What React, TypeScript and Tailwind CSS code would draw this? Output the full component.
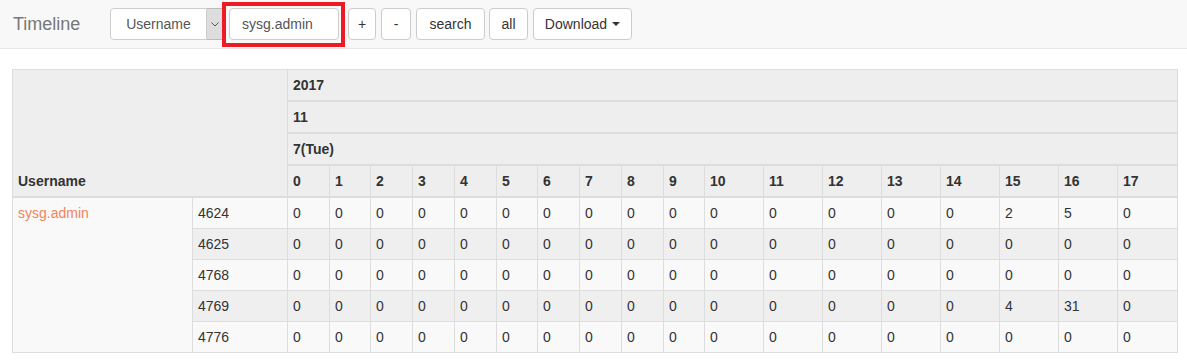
import React from "react";

const hours = Array.from({ length: 18 }, (_, i) => i);
const widths = [42, 41, 42, 42, 42, 41, 42, 42, 42, 41, 59, 59, 59, 59, 59, 59, 59, 60];

const rows: { id: string; values: Record<number, number> }[] = [
  { id: "4624", values: { 15: 2, 16: 5 } },
  { id: "4625", values: {} },
  { id: "4768", values: {} },
  { id: "4769", values: { 15: 4, 16: 31 } },
  { id: "4776", values: {} },
];

function Btn({ children, className = "" }: { children: React.ReactNode; className?: string }) {
  return (
    <button
      className={`h-[32px] rounded-[4px] border border-[#ccc] bg-white text-[14px] text-[#333] flex items-center justify-center ${className}`}
    >
      {children}
    </button>
  );
}

export default function App() {
  return (
    <div className="w-[1187px] h-[362px] bg-white text-[#333] overflow-hidden" style={{ fontFamily: '"Liberation Sans", Arial, sans-serif' }}>
      {/* Navbar */}
      <div className="h-[49px] bg-[#f8f8f8] border-b border-[#e7e7e7] flex items-center">
        <span className="w-[110px] pl-[13px] text-[18px] text-[#777]">Timeline</span>

        {/* select */}
        <div className="flex h-[32px]">
          <div className="w-[97px] h-full border border-[#ccc] rounded-l-[4px] bg-white flex items-center justify-center text-[14px] text-[#555]">
            Username
          </div>
          <div className="w-[17px] h-full border border-l-0 border-[#bbb] bg-[#ddd] flex items-center justify-center">
            <svg width="8" height="5" viewBox="0 0 8 5">
              <path d="M0.5 0.5 L4 4 L7.5 0.5" fill="none" stroke="#555" strokeWidth="1" />
            </svg>
          </div>
        </div>

        {/* input with red annotation */}
        <div className="relative ml-[5px]">
          <div className="w-[110px] h-[32px] border border-[#ccc] rounded-[4px] bg-white flex items-center pl-[12px] text-[14px] text-[#555]">
            sysg.admin
          </div>
          <div className="absolute left-[-7px] top-[-6px] w-[123px] h-[45px] border-[4px] border-[#ed1c24]" />
        </div>

        <Btn className="ml-[9px] w-[28px]">+</Btn>
        <Btn className="ml-[5px] w-[30px]">-</Btn>
        <Btn className="ml-[5px] w-[69px]">search</Btn>
        <Btn className="ml-[4px] w-[39px]">all</Btn>
        <Btn className="ml-[5px] w-[99px] gap-[5px]">
          Download
          <span className="w-0 h-0 border-x-[4px] border-x-transparent border-t-[4px] border-t-[#333]" />
        </Btn>
      </div>

      {/* Table */}
      <div className="pt-[20px] pl-[12px]">
        <table className="table-fixed border-collapse w-[1165px] text-[14px] leading-[20px]">
          <colgroup>
            <col style={{ width: 180 }} />
            <col style={{ width: 95 }} />
            {widths.map((w, i) => (
              <col key={i} style={{ width: w }} />
            ))}
          </colgroup>
          <thead className="bg-[#eee]">
            <tr>
              <th colSpan={2} rowSpan={4} className="border border-[#ddd] border-b-2 px-[5px] py-[5px] text-left align-bottom font-bold">
                Username
              </th>
              <th colSpan={18} className="border border-[#ddd] border-b-2 px-[5px] py-[5px] text-left font-bold">
                2017
              </th>
            </tr>
            <tr>
              <th colSpan={18} className="border border-[#ddd] border-b-2 px-[5px] py-[5px] text-left font-bold">
                11
              </th>
            </tr>
            <tr>
              <th colSpan={18} className="border border-[#ddd] border-b-2 px-[5px] py-[5px] text-left font-bold">
                7(Tue)
              </th>
            </tr>
            <tr>
              {hours.map((h) => (
                <th key={h} className="border border-[#ddd] border-b-2 px-[5px] py-[5px] text-left font-bold">
                  {h}
                </th>
              ))}
            </tr>
          </thead>
          <tbody>
            {rows.map((r, ri) => (
              <tr key={r.id} className={ri % 2 === 0 ? "bg-[#f9f9f9]" : "bg-[#efefef]"}>
                {ri === 0 && (
                  <td rowSpan={5} className="border border-[#ddd] px-[5px] py-[5px] align-top bg-[#f9f9f9] text-[#f0845c]">
                    sysg.admin
                  </td>
                )}
                <td className="border border-[#ddd] px-[5px] py-[5px]">{r.id}</td>
                {hours.map((h) => (
                  <td key={h} className="border border-[#ddd] px-[5px] py-[5px]">
                    {r.values[h] ?? 0}
                  </td>
                ))}
              </tr>
            ))}
          </tbody>
        </table>
      </div>
    </div>
  );
}
